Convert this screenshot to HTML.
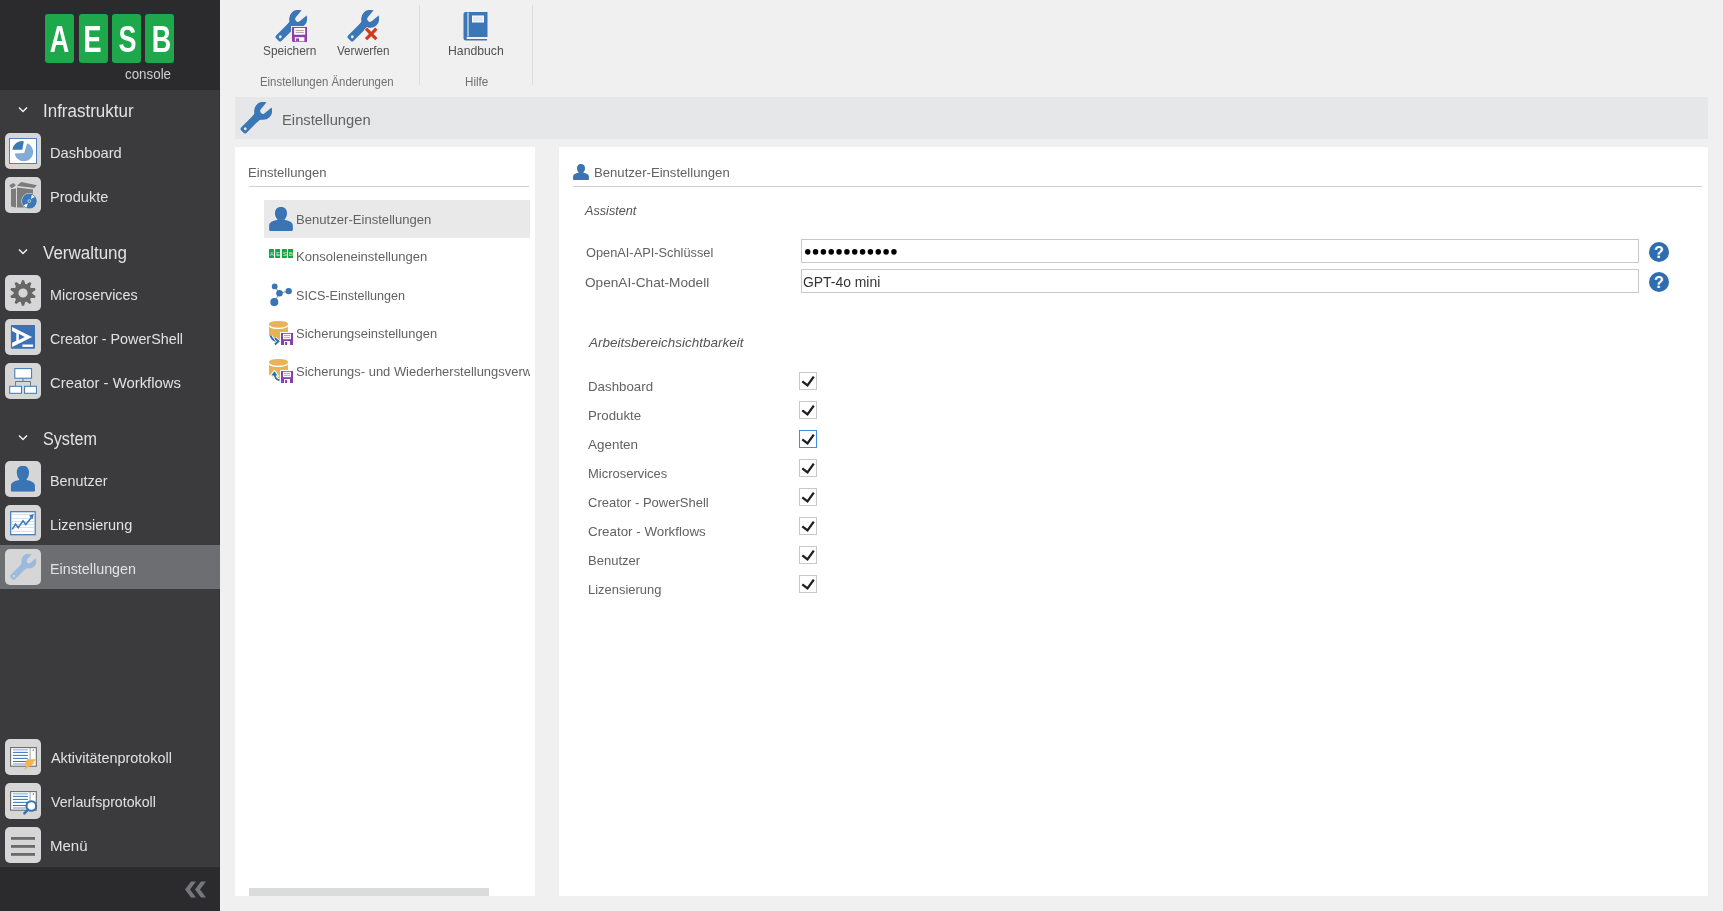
<!DOCTYPE html>
<html><head><meta charset="utf-8"><style>
*{box-sizing:border-box;margin:0;padding:0}
html,body{width:1723px;height:911px;overflow:hidden;background:#f0f0f0;font-family:"Liberation Sans",sans-serif}
.abs{position:absolute}
svg{display:block}
#sb{position:absolute;left:0;top:0;width:220px;height:911px;background:#3b3b3d}
#sbh{position:absolute;left:0;top:0;width:220px;height:90px;background:#2b2b2d}
#sbf{position:absolute;left:0;top:867px;width:220px;height:44px;background:#2b2b2d}
.lg{position:absolute;top:14px;width:29px;height:49px;background:#1da84c;border-radius:3px}
.lgt{position:absolute;left:0;top:1.3px;width:29px;height:49px;color:#fff;font-weight:bold;font-size:36px;text-align:center;line-height:49px;transform:scaleX(0.75)}
.sel{position:absolute;left:0;width:220px;height:44px;background:#6d6e71}
.ib{position:absolute;left:5px;width:36px;height:36px;background:#d6d6d6;border-radius:5px;overflow:hidden}
.ib svg{position:absolute;left:0;top:0}
.lbl{position:absolute;white-space:nowrap;transform-origin:0 0}
</style></head><body>
<svg width="0" height="0" style="position:absolute"><defs><symbol id="wr" viewBox="0 0 32 32">
<mask id="wrm" maskUnits="userSpaceOnUse" x="0" y="0" width="32" height="32">
<rect x="0" y="0" width="32" height="32" fill="#fff"/>
<g transform="translate(5.3 26.7) rotate(-45)">
<circle cx="25" cy="0" r="2.7" fill="#000"/>
<path d="M25 -2.7 L40 -4.4 L40 4.4 L25 2.7 Z" fill="#000"/>
<circle cx="0" cy="0" r="1.45" fill="#000"/>
</g></mask>
<g mask="url(#wrm)"><g transform="translate(5.3 26.7) rotate(-45)">
<rect x="-4" y="-3.75" width="24.5" height="7.5" rx="1.8"/>
<circle cx="25.3" cy="0" r="9"/>
<path d="M13 -3.5 Q18 -3.5 19.5 -6.5 L19.5 6.5 Q18 3.5 13 3.5 Z"/>
</g></g>
</symbol><symbol id="fl" viewBox="0 0 15 15">
<path d="M0 0 H15 V15 H1 L0 14 Z" fill="#8d3fae"/>
<rect x="2.1" y="1" width="11.1" height="6.7" fill="#fff"/>
<path d="M3.5 3.4 H11.8 M3.5 5.4 H11.8" stroke="#999" stroke-width="0.9"/>
<rect x="2.8" y="10.2" width="9.6" height="4.1" fill="#fff"/>
<rect x="4.1" y="11.4" width="3" height="2.9" fill="#8d3fae"/>
</symbol><symbol id="us" viewBox="0 0 24 24" preserveAspectRatio="none">
<path d="M12 0 C16.2 0 18 2.6 18 6.2 C18 9 17 11 15.6 12.2 L15.8 13.1 C20.5 14 23.5 15.5 23.8 18 L23.9 22.5 C23.9 23.4 23.3 24 22.4 24 L1.6 24 C0.7 24 0.1 23.4 0.1 22.5 L0.2 18 C0.5 15.5 3.5 14 8.2 13.1 L8.4 12.2 C7 11 6 9 6 6.2 C6 2.6 7.8 0 12 0 Z"/>
</symbol></defs></svg>
<div id="sb"></div>
<div class="abs" style="left:219px;top:0;width:1px;height:911px;background:#333335"></div>
<div id="sbh"><div class="lg" style="left:45px"><div class="lgt" style="left:-0.4px">A</div></div><div class="lg" style="left:79px"><div class="lgt" style="left:-1.3px">E</div></div><div class="lg" style="left:112px"><div class="lgt" style="left:0.7px">S</div></div><div class="lg" style="left:145px"><div class="lgt" style="left:1.8px">B</div></div></div>
<div class="lbl" id="console" style="left:125.44px;top:65.25px;line-height:18px;font-size:14px;color:#cfcfcf;transform:scaleX(0.9543);">console</div>
<svg class="abs" style="left:18px;top:106px" width="10" height="8" viewBox="0 0 10 8"><path d="M1 1.5 L5 5.5 L9 1.5" fill="none" stroke="#f0f0f0" stroke-width="1.5"/></svg>
<div class="lbl" id="sb_Infrastruktur" style="left:42.64px;top:99.94px;line-height:22px;font-size:17.5px;color:#e2e2e2;transform:scaleX(0.9700);">Infrastruktur</div>
<div class="ib" style="top:133px"><svg width="36" height="36" viewBox="0 0 36 36"><rect x="4.5" y="5.5" width="27" height="25" fill="#fff" stroke="#4a84c2" stroke-width="1"/>
<path d="M22.1 10.3 A9.3 9.3 0 1 1 9.7 20.4 L19.2 20.1 Z" fill="#84aad6"/>
<path d="M17.3 16.7 L7.3 16.7 A10 10 0 0 1 18.8 8.2 Z" fill="#3b78b8"/></svg></div>
<div class="lbl" id="sb_Dashboard" style="left:49.52px;top:143.30px;line-height:19px;font-size:15px;color:#e2e2e2;transform:scaleX(0.9779);">Dashboard</div>
<div class="ib" style="top:177px"><svg width="36" height="36" viewBox="0 0 36 36"><path d="M6 12 L11 11.5 L11 30.5 L6 29.5 Z" fill="#7b7b7b"/>
<path d="M12 10.5 L28 12.5 L28 30.5 L12 30.5 Z" fill="#7b7b7b"/>
<path d="M4.2 8.5 L8.3 6.1 L10.9 8.3 L6.9 11.5 Z" fill="#7b7b7b"/>
<path d="M12.3 8.5 L16.2 5.1 L32 8.3 L28.5 11.5 L12 9.5 Z" fill="#7b7b7b"/>
<path d="M6.5 11.8 L11.5 9.3 L28.5 11.3" fill="none" stroke="#e8e8e8" stroke-width="0.8"/>
<circle cx="24.3" cy="24.1" r="8" fill="#e8e8e8"/>
<circle cx="24.3" cy="24.1" r="7.5" fill="#3b78b8"/>
<path d="M25.90 22.05 L26.88 17.70 A6.9 6.9 0 0 1 29.88 20.04 Z M22.70 26.15 L21.72 30.50 A6.9 6.9 0 0 1 18.72 28.16 Z" fill="#fff"/>
<circle cx="24.3" cy="24.1" r="1.4" fill="none" stroke="#cfe0f2" stroke-width="0.8"/></svg></div>
<div class="lbl" id="sb_Produkte" style="left:49.52px;top:187.30px;line-height:19px;font-size:15px;color:#e2e2e2;transform:scaleX(0.9734);">Produkte</div>
<svg class="abs" style="left:18px;top:248px" width="10" height="8" viewBox="0 0 10 8"><path d="M1 1.5 L5 5.5 L9 1.5" fill="none" stroke="#f0f0f0" stroke-width="1.5"/></svg>
<div class="lbl" id="sb_Verwaltung" style="left:43.44px;top:241.54px;line-height:22px;font-size:17.5px;color:#e2e2e2;transform:scaleX(0.9702);">Verwaltung</div>
<div class="ib" style="top:275px"><svg width="36" height="36" viewBox="0 0 36 36"><path d="M16.95 5.14 L19.05 5.14 L20.17 8.85 L20.84 9.25 L21.62 9.33 L24.71 6.98 L26.41 8.22 L25.13 11.87 L25.44 12.59 L26.03 13.11 L29.90 13.03 L30.55 15.03 L27.37 17.23 L27.20 18.00 L27.37 18.77 L30.55 20.97 L29.90 22.97 L26.03 22.89 L25.44 23.41 L25.13 24.13 L26.41 27.78 L24.71 29.02 L21.62 26.67 L20.84 26.75 L20.17 27.15 L19.05 30.86 L16.95 30.86 L15.83 27.15 L15.16 26.75 L14.38 26.67 L11.29 29.02 L9.59 27.78 L10.87 24.13 L10.56 23.41 L9.97 22.89 L6.10 22.97 L5.45 20.97 L8.63 18.77 L8.80 18.00 L8.63 17.23 L5.45 15.03 L6.10 13.03 L9.97 13.11 L10.56 12.59 L10.87 11.87 L9.59 8.22 L11.29 6.98 L14.38 9.33 L15.16 9.25 L15.83 8.85 Z M22.6 18 A4.6 4.6 0 1 0 13.4 18 A4.6 4.6 0 1 0 22.6 18 Z" fill="#666666" fill-rule="evenodd"/></svg></div>
<div class="lbl" id="sb_Microservices" style="left:49.52px;top:285.30px;line-height:19px;font-size:15px;color:#e2e2e2;transform:scaleX(0.9560);">Microservices</div>
<div class="ib" style="top:319px"><svg width="36" height="36" viewBox="0 0 36 36"><path d="M6.6 5.9 H29.3 L30 6.6 V29.1 L29.3 29.8 H6.6 L5.9 29.1 V6.6 Z" fill="#3a72b5"/>
<path d="M7.1 8.1 L27.1 18 L7.1 27.9 L7.1 23.7 L11.3 21.7 L11.3 14.2 L7.1 12.1 Z M13.8 14.8 L13.8 21.1 L19.8 18 Z" fill="#fff" fill-rule="evenodd"/>
<rect x="17.4" y="25.5" width="10.7" height="2.4" fill="#fff"/></svg></div>
<div class="lbl" id="sb_Creator - PowerShell" style="left:49.52px;top:329.30px;line-height:19px;font-size:15px;color:#e2e2e2;transform:scaleX(0.9553);">Creator - PowerShell</div>
<div class="ib" style="top:363px"><svg width="36" height="36" viewBox="0 0 36 36"><rect x="9.8" y="5.6" width="16.8" height="9.6" fill="#fff" stroke="#3b78b8" stroke-width="1"/>
<path d="M18 15.2 L18 18.5 M10.5 22.8 L10.5 18.5 L25.5 18.5 L25.5 22.8" fill="none" stroke="#777" stroke-width="1"/>
<rect x="4.7" y="23.3" width="11.8" height="7" fill="#fff" stroke="#3b78b8" stroke-width="1"/>
<rect x="19.6" y="23.3" width="11.8" height="7" fill="#fff" stroke="#3b78b8" stroke-width="1"/></svg></div>
<div class="lbl" id="sb_Creator - Workflows" style="left:49.52px;top:373.30px;line-height:19px;font-size:15px;color:#e2e2e2;transform:scaleX(0.9896);">Creator - Workflows</div>
<svg class="abs" style="left:18px;top:434px" width="10" height="8" viewBox="0 0 10 8"><path d="M1 1.5 L5 5.5 L9 1.5" fill="none" stroke="#f0f0f0" stroke-width="1.5"/></svg>
<div class="lbl" id="sb_System" style="left:42.64px;top:427.84px;line-height:22px;font-size:17.5px;color:#e2e2e2;transform:scaleX(0.9235);">System</div>
<div class="ib" style="top:461px"><svg width="36" height="36" viewBox="0 0 36 36"><use href="#us" x="5.7" y="4.7" width="24.4" height="26.1" fill="#3a74b4"/></svg></div>
<div class="lbl" id="sb_Benutzer" style="left:49.52px;top:471.30px;line-height:19px;font-size:15px;color:#e2e2e2;transform:scaleX(0.9566);">Benutzer</div>
<div class="ib" style="top:505px"><svg width="36" height="36" viewBox="0 0 36 36"><rect x="5.7" y="6.7" width="24.5" height="23" fill="#fff" stroke="#3b78b8" stroke-width="1.2"/>
<path d="M7 9.4 H29 M7 13.4 H29 M7 16.5 H29 M7 19.5 H29 M7 22.4 H29 M7 26.4 H29" stroke="#c5d5e8" stroke-width="0.8"/>
<path d="M7.3 24.3 L10.5 19.1 L13.2 22.7 L18 15.8 L20.8 19.5 L26.5 12.6" fill="none" stroke="#3b78b8" stroke-width="1.6"/>
<path d="M24 10.6 L28.8 9 L27.6 14.2 Z" fill="#3b78b8"/></svg></div>
<div class="lbl" id="sb_Lizensierung" style="left:49.52px;top:515.30px;line-height:19px;font-size:15px;color:#e2e2e2;transform:scaleX(0.9668);">Lizensierung</div>
<div class="sel" style="top:545px"></div>
<div class="ib" style="top:549px"><svg width="36" height="36" viewBox="0 0 36 36"><use href="#wr" x="4.5" y="4.5" width="27" height="27" fill="#9bbade"/></svg></div>
<div class="lbl" id="sb_Einstellungen" style="left:49.52px;top:559.30px;line-height:19px;font-size:15px;color:#e2e2e2;transform:scaleX(0.9550);">Einstellungen</div>
<div class="ib" style="top:739px"><svg width="36" height="36" viewBox="0 0 36 36"><rect x="5.6" y="8.6" width="25.7" height="18.6" fill="#fff" stroke="#6a6a6a" stroke-width="1.1"/>
<path d="M7.9 13.4 H22.9 M7.9 16.4 H22.9 M7.9 19.4 H22.9 M7.9 22.5 H22.9" stroke="#3a72b5" stroke-width="1"/>
<path d="M7.9 10.9 H22.9 M7.9 25 H22.9" stroke="#9bb9dc" stroke-width="1.3"/>
<path d="M25.1 9 V27" stroke="#aaa" stroke-width="1.1"/>
<path d="M27.4 11.4 L28.3 10 L29.2 11.4 Z" fill="#444"/><path d="M21.9 20.2 L31.6 20.2 L27.9 23.7 L30 23.7 L18.6 31.6 L22.1 26.1 L19.6 26.1 Z" fill="#eeb458"/></svg></div>
<div class="lbl" id="sb_Aktivitätenprotokoll" style="left:51.12px;top:748.30px;line-height:19px;font-size:15px;color:#e2e2e2;transform:scaleX(0.9600);">Aktivitätenprotokoll</div>
<div class="ib" style="top:783px"><svg width="36" height="36" viewBox="0 0 36 36"><rect x="5.6" y="8.6" width="25.7" height="18.6" fill="#fff" stroke="#6a6a6a" stroke-width="1.1"/>
<path d="M7.9 13.4 H22.9 M7.9 16.4 H22.9 M7.9 19.4 H22.9 M7.9 22.5 H22.9" stroke="#3a72b5" stroke-width="1"/>
<path d="M7.9 10.9 H22.9 M7.9 25 H22.9" stroke="#9bb9dc" stroke-width="1.3"/>
<path d="M25.1 9 V27" stroke="#aaa" stroke-width="1.1"/>
<path d="M27.4 11.4 L28.3 10 L29.2 11.4 Z" fill="#444"/><circle cx="26.3" cy="23" r="4.8" fill="#fff" stroke="#3674b6" stroke-width="2.1"/>
<path d="M22.7 26.8 L19.4 30.4" stroke="#3674b6" stroke-width="2.6" stroke-linecap="round"/></svg></div>
<div class="lbl" id="sb_Verlaufsprotokoll" style="left:51.12px;top:792.30px;line-height:19px;font-size:15px;color:#e2e2e2;transform:scaleX(0.9455);">Verlaufsprotokoll</div>
<div class="ib" style="top:827px"><svg width="36" height="36" viewBox="0 0 36 36"><rect x="6" y="10" width="24" height="2.8" fill="#6a6a6a"/><rect x="6" y="18" width="24" height="2.8" fill="#6a6a6a"/><rect x="6" y="26" width="24" height="2.8" fill="#6a6a6a"/></svg></div>
<div class="lbl" id="sb_Menü" style="left:49.52px;top:836.30px;line-height:19px;font-size:15px;color:#e2e2e2;transform:scaleX(1.0008);">Menü</div>
<div id="sbf"><svg class="abs" style="left:184px;top:14px" width="23" height="17" viewBox="0 0 23 17"><path d="M7 0.5 L12 0.5 L6 8.5 L12 16.5 L7 16.5 L1 8.5 Z M17 0.5 L22 0.5 L16 8.5 L22 16.5 L17 16.5 L11 8.5 Z" fill="#75777b"/></svg></div>
<svg class="abs" style="left:275px;top:10px" width="32" height="32"><use href="#wr" width="32" height="32" fill="#3b76b6"/></svg>
<svg class="abs" style="left:291px;top:26px" width="17" height="17"><rect x="0" y="0" width="17" height="17" fill="#f0f0f0"/><use href="#fl" x="1" y="1" width="15" height="15"/></svg>
<div class="lbl" id="tb_sp" style="left:263.46px;top:42.75px;line-height:16px;font-size:12.7px;color:#505050;transform:scaleX(0.9323);">Speichern</div>
<svg class="abs" style="left:347px;top:10px" width="32" height="32"><use href="#wr" width="32" height="32" fill="#3b76b6"/></svg>
<svg class="abs" style="left:363px;top:26px" width="17" height="17" viewBox="0 0 17 17"><g transform="rotate(45 8.2 7.9)"><path d="M6.6 0.6 H9.8 V6.3 H15.5 V9.5 H9.8 V15.2 H6.6 V9.5 H0.9 V6.3 H6.6 Z" fill="#cf3a1e" stroke="#f0f0f0" stroke-width="1.2" paint-order="stroke"/></g></svg>
<div class="lbl" id="tb_vw" style="left:337.06px;top:42.75px;line-height:16px;font-size:12.7px;color:#505050;transform:scaleX(0.9175);">Verwerfen</div>
<div class="lbl" id="tb_grp1" style="left:260.02px;top:73.73px;line-height:16px;font-size:12.6px;color:#707070;transform:scaleX(0.9039);">Einstellungen Änderungen</div>
<div class="abs" style="left:419px;top:5px;width:1px;height:80px;background:#dcdcdc"></div>
<svg class="abs" style="left:463.3px;top:11px" width="25" height="30" viewBox="0 0 25 30"><path d="M2.5 1 L24.5 1 L24.5 26 L4.5 26 Q3.5 26 3.5 27 Q3.5 28 4.5 28 L24 28 L24 29.5 L3 29.5 Q0.5 29.5 0.5 27 L0.5 3 Q0.5 1 2.5 1 Z" fill="#3b76b6"/><path d="M5 1.5 L5 25.5" stroke="#fff" stroke-width="1"/><rect x="9.5" y="5" width="11" height="6" fill="#dfe8f3" stroke="#fff" stroke-width="1"/></svg>
<div class="lbl" id="tb_hb" style="left:448.14px;top:42.75px;line-height:16px;font-size:12.7px;color:#505050;transform:scaleX(0.9645);">Handbuch</div>
<div class="lbl" id="tb_grp2" style="left:464.52px;top:73.73px;line-height:16px;font-size:12.6px;color:#707070;transform:scaleX(0.9260);">Hilfe</div>
<div class="abs" style="left:532px;top:5px;width:1px;height:80px;background:#dcdcdc"></div>
<div class="abs" style="left:235px;top:97px;width:1473px;height:42px;background:#e6e7e9"></div>
<svg class="abs" style="left:240px;top:102px" width="32" height="32"><use href="#wr" width="32" height="32" fill="#3b76b6"/></svg>
<div class="lbl" id="title" style="left:281.64px;top:110.16px;line-height:19px;font-size:15.4px;color:#626262;transform:scaleX(0.9604);">Einstellungen</div>
<div class="abs" style="left:235px;top:147px;width:300px;height:749px;background:#fff"></div>
<div class="lbl" id="lp_head" style="left:248.24px;top:164.63px;line-height:16px;font-size:13.2px;color:#626262;transform:scaleX(0.9919);">Einstellungen</div>
<div class="abs" style="left:249px;top:186px;width:280px;height:1px;background:#d0d0d0"></div>
<div class="abs" style="left:264px;top:200px;width:266px;height:38px;background:#e9e9e9"></div>
<svg class="abs" style="left:269px;top:207px" width="24" height="24"><use href="#us" x="0" y="0" width="24" height="24" fill="#3a74b4"/></svg>
<div class="abs" style="left:297px;top:200px;width:233px;height:38px;overflow:hidden"><div class="lbl" id="lp_0" style="left:-0.98px;top:10.59px;line-height:17px;font-size:13.6px;color:#626262;transform:scaleX(0.9629);">Benutzer-Einstellungen</div></div>
<svg class="abs" style="left:269px;top:249px" width="24" height="10" viewBox="0 0 24 10"><rect x="0" y="0" width="5" height="9" rx="0.5" fill="#17a347"/><text x="2.8" y="6.9" font-size="6" fill="#d8f0de" text-anchor="middle" font-family="Liberation Sans">A</text><rect x="6.1" y="0" width="5" height="9" rx="0.5" fill="#17a347"/><text x="8.899999999999999" y="6.9" font-size="6" fill="#d8f0de" text-anchor="middle" font-family="Liberation Sans">E</text><rect x="12.9" y="0" width="5" height="9" rx="0.5" fill="#17a347"/><text x="15.7" y="6.9" font-size="6" fill="#d8f0de" text-anchor="middle" font-family="Liberation Sans">S</text><rect x="19" y="0" width="5" height="9" rx="0.5" fill="#17a347"/><text x="21.8" y="6.9" font-size="6" fill="#d8f0de" text-anchor="middle" font-family="Liberation Sans">B</text></svg>
<div class="abs" style="left:297px;top:238px;width:233px;height:38px;overflow:hidden"><div class="lbl" id="lp_1" style="left:-0.98px;top:10.49px;line-height:17px;font-size:13.6px;color:#626262;transform:scaleX(0.9597);">Konsoleneinstellungen</div></div>
<svg class="abs" style="left:269px;top:282px" width="24" height="24" viewBox="0 0 24 24"><path d="M5.7 4.4 L10.5 11.2 L19.7 9.1 M10.5 11.2 L5.3 20.1" fill="none" stroke="#8a8a8a" stroke-width="1"/><circle cx="5.7" cy="4.4" r="2.9" fill="#3a74b4"/><circle cx="10.5" cy="11.2" r="3.3" fill="#3a74b4"/><circle cx="19.7" cy="9.1" r="3.2" fill="#3a74b4"/><circle cx="5.3" cy="20.1" r="4" fill="#3a74b4"/></svg>
<div class="abs" style="left:297px;top:276px;width:233px;height:38px;overflow:hidden"><div class="lbl" id="lp_2" style="left:-0.98px;top:10.79px;line-height:17px;font-size:13.6px;color:#626262;transform:scaleX(0.9246);">SICS-Einstellungen</div></div>
<svg class="abs" style="left:269px;top:320px" width="26" height="26" viewBox="0 0 26 26"><path d="M0 4 Q0 1 9.5 1 Q19 1 19 4 L19 17 Q19 19.5 12 20 L12 21 Q6 21 0 16.5 Z" fill="#e9b257"/><path d="M0.2 5.6 Q1.5 8.4 9.5 8.4 Q17.5 8.4 18.8 5.6" fill="none" stroke="#fff" stroke-width="1.2"/><path d="M1.8 15.8 Q2.8 20.6 8.5 21.2" fill="none" stroke="#fff" stroke-width="3.6"/><path d="M1.8 15.8 Q2.8 20.6 8.5 21.2" fill="none" stroke="#2f6db0" stroke-width="1.9"/><path d="M5.9 18.2 L9.4 21.3 L5.9 24.4" fill="none" stroke="#fff" stroke-width="3.4"/><path d="M5.9 18.2 L9.4 21.3 L5.9 24.4" fill="none" stroke="#2f6db0" stroke-width="2"/><rect x="11" y="12" width="14" height="14" fill="#fff"/><path d="M12 13 H24 V25 H12 Z" fill="#8a3fae"/><rect x="14" y="13.8" width="8" height="5.4" fill="#fff"/><path d="M15 15.5 H21 M15 17.4 H21" stroke="#999" stroke-width="0.8"/><rect x="15" y="21" width="6" height="4" fill="#fff"/><rect x="16.1" y="22" width="2" height="3" fill="#8a3fae"/></svg>
<div class="abs" style="left:297px;top:314px;width:233px;height:38px;overflow:hidden"><div class="lbl" id="lp_3" style="left:-0.98px;top:10.59px;line-height:17px;font-size:13.6px;color:#626262;transform:scaleX(0.9526);">Sicherungseinstellungen</div></div>
<svg class="abs" style="left:269px;top:358px" width="26" height="26" viewBox="0 0 26 26"><path d="M0 4 Q0 1 9.5 1 Q19 1 19 4 L19 17 Q19 19.5 12 20 L12 21 Q6 21 0 16.5 Z" fill="#e9b257"/><path d="M0.2 5.6 Q1.5 8.4 9.5 8.4 Q17.5 8.4 18.8 5.6" fill="none" stroke="#fff" stroke-width="1.2"/><path d="M10.5 22.3 Q6 21.5 5.4 15.5" fill="none" stroke="#fff" stroke-width="3.6"/><path d="M2.3 17.4 L5.4 13.2 L8.5 17.4 Z" fill="#fff" stroke="#fff" stroke-width="2"/><path d="M10.5 22.3 Q6 21.5 5.4 15.5" fill="none" stroke="#2f6db0" stroke-width="1.9"/><path d="M2.3 17.4 L5.4 13.2 L8.5 17.4 Z" fill="#2f6db0"/><rect x="11" y="12" width="14" height="14" fill="#fff"/><path d="M12 13 H24 V25 H12 Z" fill="#8a3fae"/><rect x="14" y="13.8" width="8" height="5.4" fill="#fff"/><path d="M15 15.5 H21 M15 17.4 H21" stroke="#999" stroke-width="0.8"/><rect x="15" y="21" width="6" height="4" fill="#fff"/><rect x="16.1" y="22" width="2" height="3" fill="#8a3fae"/></svg>
<div class="abs" style="left:297px;top:352px;width:233px;height:38px;overflow:hidden"><div class="lbl" id="lp_4" style="left:-0.98px;top:10.69px;line-height:17px;font-size:13.6px;color:#626262;transform:scaleX(0.9526);">Sicherungs- und Wiederherstellungsverwaltung</div></div>
<div class="abs" style="left:249px;top:888px;width:240px;height:8px;background:#dadcdc"></div>
<div class="abs" style="left:559px;top:147px;width:1149px;height:749px;background:#fff"></div>
<svg class="abs" style="left:573px;top:164px" width="16" height="16"><use href="#us" width="16" height="16" fill="#3a74b4"/></svg>
<div class="lbl" id="rp_head" style="left:594.04px;top:164.19px;line-height:17px;font-size:13.6px;color:#626262;transform:scaleX(0.9654);">Benutzer-Einstellungen</div>
<div class="abs" style="left:573px;top:186px;width:1129px;height:1px;background:#d0d0d0"></div>
<div class="lbl" id="rp_assist" style="left:585.18px;top:201.86px;line-height:17px;font-size:13.4px;color:#555;transform:scaleX(0.9444);font-style:italic;">Assistent</div>
<div class="lbl" id="rp_api" style="left:585.62px;top:243.89px;line-height:17px;font-size:13.6px;color:#626262;transform:scaleX(0.9409);">OpenAI-API-Schlüssel</div>
<div class="lbl" id="rp_chat" style="left:584.82px;top:273.79px;line-height:17px;font-size:13.6px;color:#626262;transform:scaleX(1.0026);">OpenAI-Chat-Modell</div>
<div class="abs" style="left:801px;top:239px;width:838px;height:24px;border:1px solid #c8c8c8;background:#fff"></div>
<div class="abs" style="left:801px;top:269px;width:838px;height:24px;border:1px solid #c8c8c8;background:#fff"></div>
<svg class="abs" style="left:805px;top:249.2px" width="100" height="6"><ellipse cx="2.70" cy="2.85" rx="2.75" ry="2.85" fill="#000"/><ellipse cx="10.54" cy="2.85" rx="2.75" ry="2.85" fill="#000"/><ellipse cx="18.38" cy="2.85" rx="2.75" ry="2.85" fill="#000"/><ellipse cx="26.22" cy="2.85" rx="2.75" ry="2.85" fill="#000"/><ellipse cx="34.06" cy="2.85" rx="2.75" ry="2.85" fill="#000"/><ellipse cx="41.90" cy="2.85" rx="2.75" ry="2.85" fill="#000"/><ellipse cx="49.74" cy="2.85" rx="2.75" ry="2.85" fill="#000"/><ellipse cx="57.58" cy="2.85" rx="2.75" ry="2.85" fill="#000"/><ellipse cx="65.42" cy="2.85" rx="2.75" ry="2.85" fill="#000"/><ellipse cx="73.26" cy="2.85" rx="2.75" ry="2.85" fill="#000"/><ellipse cx="81.10" cy="2.85" rx="2.75" ry="2.85" fill="#000"/><ellipse cx="88.94" cy="2.85" rx="2.75" ry="2.85" fill="#000"/></svg>
<div class="lbl" id="rp_gpt" style="left:803.26px;top:274.08px;line-height:17px;font-size:13.9px;color:#333;transform:scaleX(1.0007);">GPT-4o mini</div>
<svg class="abs" style="left:1649px;top:242px" width="20" height="20" viewBox="0 0 20 20"><circle cx="10" cy="10" r="10" fill="#2f6db0"/><text x="10" y="15.9" font-size="16" font-weight="bold" fill="#fff" text-anchor="middle" font-family="Liberation Sans">?</text></svg>
<svg class="abs" style="left:1649px;top:272px" width="20" height="20" viewBox="0 0 20 20"><circle cx="10" cy="10" r="10" fill="#2f6db0"/><text x="10" y="15.9" font-size="16" font-weight="bold" fill="#fff" text-anchor="middle" font-family="Liberation Sans">?</text></svg>
<div class="lbl" id="rp_arb" style="left:588.98px;top:333.89px;line-height:17px;font-size:13.6px;color:#555;transform:scaleX(0.9925);font-style:italic;">Arbeitsbereichsichtbarkeit</div>
<div class="lbl" id="cb_0" style="left:587.64px;top:378.19px;line-height:17px;font-size:13.6px;color:#626262;transform:scaleX(0.9788);">Dashboard</div>
<svg class="abs" style="left:799px;top:372px" width="18" height="18" viewBox="0 0 18 18"><rect x="0.5" y="0.5" width="17" height="17" fill="#fff" stroke="#c8c8c8" stroke-width="1"/><path d="M3.3 9.3 L8.5 13.4 L14.8 4.6" fill="none" stroke="#1f1f1f" stroke-width="2.3"/></svg>
<div class="lbl" id="cb_1" style="left:587.64px;top:407.19px;line-height:17px;font-size:13.6px;color:#626262;transform:scaleX(0.9756);">Produkte</div>
<svg class="abs" style="left:799px;top:401px" width="18" height="18" viewBox="0 0 18 18"><rect x="0.5" y="0.5" width="17" height="17" fill="#fff" stroke="#c8c8c8" stroke-width="1"/><path d="M3.3 9.3 L8.5 13.4 L14.8 4.6" fill="none" stroke="#1f1f1f" stroke-width="2.3"/></svg>
<div class="lbl" id="cb_2" style="left:588.44px;top:436.19px;line-height:17px;font-size:13.6px;color:#626262;transform:scaleX(0.9887);">Agenten</div>
<svg class="abs" style="left:799px;top:430px" width="18" height="18" viewBox="0 0 18 18"><rect x="0.5" y="0.5" width="17" height="17" fill="#fff" stroke="#3d8fe0" stroke-width="1"/><path d="M3.3 9.3 L8.5 13.4 L14.8 4.6" fill="none" stroke="#1f1f1f" stroke-width="2.3"/></svg>
<div class="lbl" id="cb_3" style="left:587.64px;top:465.19px;line-height:17px;font-size:13.6px;color:#626262;transform:scaleX(0.9537);">Microservices</div>
<svg class="abs" style="left:799px;top:459px" width="18" height="18" viewBox="0 0 18 18"><rect x="0.5" y="0.5" width="17" height="17" fill="#fff" stroke="#c8c8c8" stroke-width="1"/><path d="M3.3 9.3 L8.5 13.4 L14.8 4.6" fill="none" stroke="#1f1f1f" stroke-width="2.3"/></svg>
<div class="lbl" id="cb_4" style="left:587.64px;top:494.19px;line-height:17px;font-size:13.6px;color:#626262;transform:scaleX(0.9570);">Creator - PowerShell</div>
<svg class="abs" style="left:799px;top:488px" width="18" height="18" viewBox="0 0 18 18"><rect x="0.5" y="0.5" width="17" height="17" fill="#fff" stroke="#c8c8c8" stroke-width="1"/><path d="M3.3 9.3 L8.5 13.4 L14.8 4.6" fill="none" stroke="#1f1f1f" stroke-width="2.3"/></svg>
<div class="lbl" id="cb_5" style="left:587.64px;top:523.19px;line-height:17px;font-size:13.6px;color:#626262;transform:scaleX(0.9820);">Creator - Workflows</div>
<svg class="abs" style="left:799px;top:517px" width="18" height="18" viewBox="0 0 18 18"><rect x="0.5" y="0.5" width="17" height="17" fill="#fff" stroke="#c8c8c8" stroke-width="1"/><path d="M3.3 9.3 L8.5 13.4 L14.8 4.6" fill="none" stroke="#1f1f1f" stroke-width="2.3"/></svg>
<div class="lbl" id="cb_6" style="left:587.64px;top:552.19px;line-height:17px;font-size:13.6px;color:#626262;transform:scaleX(0.9571);">Benutzer</div>
<svg class="abs" style="left:799px;top:546px" width="18" height="18" viewBox="0 0 18 18"><rect x="0.5" y="0.5" width="17" height="17" fill="#fff" stroke="#c8c8c8" stroke-width="1"/><path d="M3.3 9.3 L8.5 13.4 L14.8 4.6" fill="none" stroke="#1f1f1f" stroke-width="2.3"/></svg>
<div class="lbl" id="cb_7" style="left:587.64px;top:581.19px;line-height:17px;font-size:13.6px;color:#626262;transform:scaleX(0.9513);">Lizensierung</div>
<svg class="abs" style="left:799px;top:575px" width="18" height="18" viewBox="0 0 18 18"><rect x="0.5" y="0.5" width="17" height="17" fill="#fff" stroke="#c8c8c8" stroke-width="1"/><path d="M3.3 9.3 L8.5 13.4 L14.8 4.6" fill="none" stroke="#1f1f1f" stroke-width="2.3"/></svg>
</body></html>
